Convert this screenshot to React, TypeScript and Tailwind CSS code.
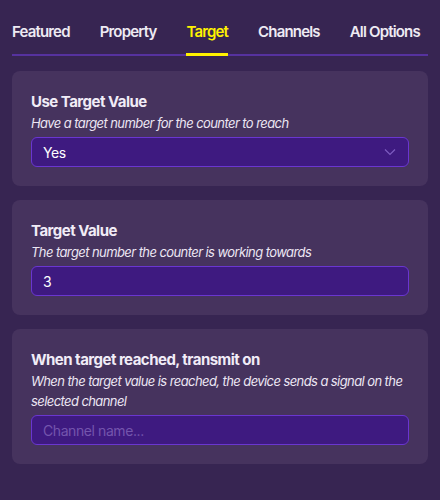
import React from "react";

const tabs = ["Featured", "Property", "Target", "Channels", "All Options"];

function Card({ title, desc, children }: { title: string; desc: string; children: React.ReactNode }) {
  return (
    <div className="rounded-lg bg-[#46335e] px-[19px] pt-[20px] pb-[19px]">
      <div className="text-[15px] leading-[22px] font-bold tracking-[-0.035em] text-[#f1ecf7]">{title}</div>
      <div className="text-[13px] leading-[20px] italic tracking-[-0.045em] text-[#ece6f3]">{desc}</div>
      <div className="mt-[4px]">{children}</div>
    </div>
  );
}

export default function App() {
  return (
    <div className="w-[440px] h-[500px] bg-[#372552] font-['Inter',sans-serif] px-3">
      <div className="flex gap-[30px] pt-[19px] border-b-[2px] border-[#56329f]">
        {tabs.map((t) => (
          <div key={t} className="relative pb-[11px] whitespace-nowrap">
            <span
              className={
                "text-[15px] leading-[22px] font-semibold tracking-[-0.055em] " +
                (t === "Target" ? "text-[#fff200]" : "text-[#eeeaf3]")
              }
            >
              {t}
            </span>
            {t === "Target" && (
              <div className="absolute left-0 right-0 bottom-[-2px] h-[3px] bg-[#fff200]" />
            )}
          </div>
        ))}
      </div>
      <div className="flex flex-col gap-[14px] mt-[15px]">
        <Card title="Use Target Value" desc="Have a target number for the counter to reach">
          <div className="h-[30px] rounded-md border border-[#6a36d0] bg-[#3e1a80] flex items-center justify-between pl-[11px] pr-[12px]">
            <span className="text-[14px] tracking-[-0.03em] text-white">Yes</span>
            <svg width="12" height="8" viewBox="0 0 12 8" fill="none">
              <path d="M1 1.5 L6 6.5 L11 1.5" stroke="#7d5cc0" strokeWidth="1.2" />
            </svg>
          </div>
        </Card>
        <Card title="Target Value" desc="The target number the counter is working towards">
          <div className="h-[30px] rounded-md border border-[#6a36d0] bg-[#3e1a80] flex items-center pl-[11px]">
            <span className="text-[14px] tracking-[-0.03em] text-white">3</span>
          </div>
        </Card>
        <Card
          title="When target reached, transmit on"
          desc="When the target value is reached, the device sends a signal on the selected channel"
        >
          <div className="h-[30px] rounded-md border border-[#6a36d0] bg-[#3e1a80] flex items-center pl-[11px]">
            <span className="text-[14px] tracking-[-0.03em] text-[#7455ad]">Channel name...</span>
          </div>
        </Card>
      </div>
    </div>
  );
}
